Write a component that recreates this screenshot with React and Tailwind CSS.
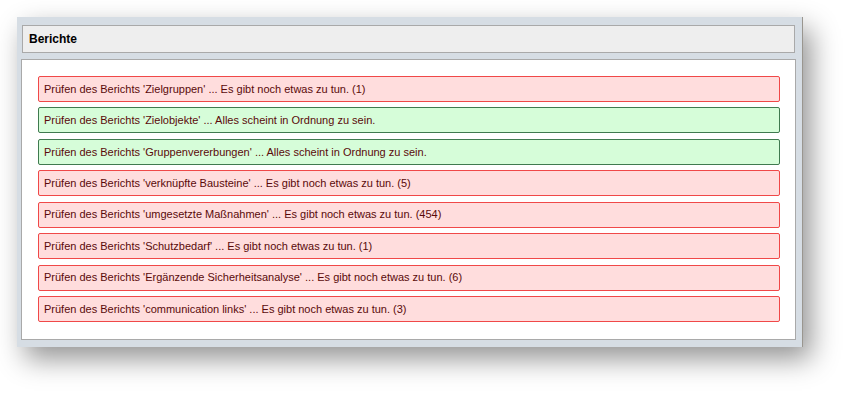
import React from "react";

const rows = [
  { ok: false, text: "Prüfen des Berichts 'Zielgruppen' ... Es gibt noch etwas zu tun. (1)" },
  { ok: true, text: "Prüfen des Berichts 'Zielobjekte' ... Alles scheint in Ordnung zu sein." },
  { ok: true, text: "Prüfen des Berichts 'Gruppenvererbungen' ... Alles scheint in Ordnung zu sein." },
  { ok: false, text: "Prüfen des Berichts 'verknüpfte Bausteine' ... Es gibt noch etwas zu tun. (5)" },
  { ok: false, text: "Prüfen des Berichts 'umgesetzte Maßnahmen' ... Es gibt noch etwas zu tun. (454)" },
  { ok: false, text: "Prüfen des Berichts 'Schutzbedarf' ... Es gibt noch etwas zu tun. (1)" },
  { ok: false, text: "Prüfen des Berichts 'Ergänzende Sicherheitsanalyse' ... Es gibt noch etwas zu tun. (6)" },
  { ok: false, text: "Prüfen des Berichts 'communication links' ... Es gibt noch etwas zu tun. (3)" },
];

export default function App() {
  return (
    <div
      className="w-[851px] h-[395px] bg-white pt-[17px] pl-[17px]"
      style={{ fontFamily: '"Liberation Sans", Arial, sans-serif' }}
    >
      <div className="w-[786px] h-[330px] bg-[#d6dde4] border-r border-r-[#9a968f] shadow-[8px_12px_26px_rgba(0,0,0,0.42)] pt-[8px] pl-[4px] pr-[6px]">
        <div className="ml-[1px] mr-[1px] h-[28px] bg-[#eeeeee] border border-[#a9a9a9] flex items-center pl-[6px] text-[12px] font-bold text-black">
          Berichte
        </div>
        <div className="mt-[6px] h-[281px] bg-white border border-[#a9a9a9] pt-[16px] pl-[16px] pr-[15px] flex flex-col gap-[5.43px]">
          {rows.map((r, i) => (
            <div
              key={i}
              className={
                "h-[26px] rounded-[2px] border flex items-center pl-[5px] text-[11px] " +
                (r.ok
                  ? "bg-[#d6fdd9] border-[#3f7a4f] text-[#5a0a0a]"
                  : "bg-[#ffdddd] border-[#f04848] text-[#5a0a0a]")
              }
            >
              {r.text}
            </div>
          ))}
        </div>
      </div>
    </div>
  );
}
